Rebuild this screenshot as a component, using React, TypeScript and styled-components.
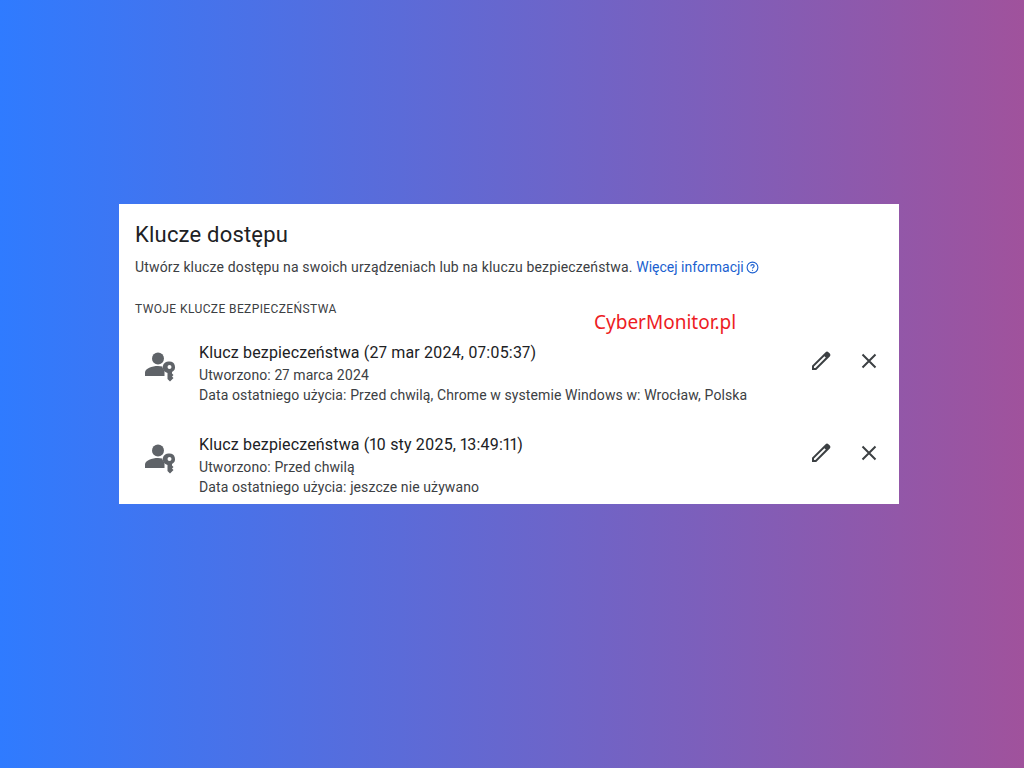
import styled, { createGlobalStyle } from "styled-components";

const GlobalStyle = createGlobalStyle`
  html, body {
    margin: 0;
    padding: 0;
    height: 100%;
  }
  #root {
    height: 100%;
  }
`;

const keys = [
  {
    name: "Klucz bezpieczeństwa (27 mar 2024, 07:05:37)",
    created: "Utworzono: 27 marca 2024",
    used: "Data ostatniego użycia: Przed chwilą, Chrome w systemie Windows w: Wrocław, Polska",
  },
  {
    name: "Klucz bezpieczeństwa (10 sty 2025, 13:49:11)",
    created: "Utworzono: Przed chwilą",
    used: "Data ostatniego użycia: jeszcze nie używano",
  },
];

const PasskeyIcon = () => (
  <svg width="32" height="32" viewBox="0 0 32 32" fill="#5f6368">
    <circle cx="14" cy="8.5" r="6" />
    <path d="M1 26v-3.5c0-4 7-6.5 13-6.5 1.5 0 3 .2 4.3.5.3 1.700 1 3 2.200 4V26H1z" />
    <path
      fillRule="evenodd"
      d="M25.500 11.500a5.500 5.500 0 0 1 2.500 10.400v1.600l1.500 1.500-1.500 1.500 1.500 1.500-3.500 3.500-2.500-2.500v-6.100a5.500 5.500 0 0 1 2-11.400zm0 3.500a2 2 0 1 0 0 4 2 2 0 0 0 0-4z"
    />
  </svg>
);

const PencilIcon = () => (
  <svg width="24" height="24" viewBox="0 0 24 24" fill="#3c4043">
    <path
      fillRule="evenodd"
      d="M3 21v-4.200L16.600 3.200a2 2 0 0 1 2.800 0l1.400 1.400a2 2 0 0 1 0 2.800L7.200 21H3zm2-2h1.400L16.800 8.600l-1.400-1.400L5 17.600V19z"
    />
  </svg>
);

const CloseIcon = () => (
  <svg width="24" height="24" viewBox="0 0 24 24" fill="none" stroke="#3c4043" strokeWidth="2">
    <path d="M5.500 5.500l13 13M18.500 5.500l-13 13" />
  </svg>
);

const HelpIcon = () => (
  <svg width="13" height="13" viewBox="0 0 13 13" fill="none" stroke="#1a5fd0" strokeWidth="1.100">
    <circle cx="6.500" cy="6.500" r="5.400" />
    <path d="M4.800 5.200c0-1 .8-1.600 1.700-1.600s1.700.6 1.700 1.500c0 1.200-1.700 1.200-1.700 2.500" />
    <path d="M6.500 8.800v1" />
  </svg>
);

export default function App() {
  return (
    <Page>
      <GlobalStyle />
      <Card>
        <Title>Klucze dostępu</Title>
        <Description>
          Utwórz klucze dostępu na swoich urządzeniach lub na kluczu bezpieczeństwa.{" "}
          <MoreLink>
            Więcej informacji
            <HelpIcon />
          </MoreLink>
        </Description>
        <SectionLabel>Twoje klucze bezpieczeństwa</SectionLabel>
        <KeyList>
          {keys.map((k) => (
            <KeyRow key={k.name}>
              <KeyIcon>
                <PasskeyIcon />
              </KeyIcon>
              <KeyInfo>
                <KeyName>{k.name}</KeyName>
                <KeyMeta>{k.created}</KeyMeta>
                <KeyMeta>{k.used}</KeyMeta>
              </KeyInfo>
              <Actions>
                <ActionButton>
                  <PencilIcon />
                </ActionButton>
                <ActionButton>
                  <CloseIcon />
                </ActionButton>
              </Actions>
            </KeyRow>
          ))}
        </KeyList>
        <Watermark>CyberMonitor.pl</Watermark>
      </Card>
    </Page>
  );
}

const Page = styled.div`
  box-sizing: border-box;
  height: 100%;
  padding: 204px 0 0 119px;
  background: linear-gradient(90deg, #2f7bff 0%, #a0529c 100%);
`;

const Card = styled.div`
  position: relative;
  box-sizing: border-box;
  width: 780px;
  height: 300px;
  padding: 17px 16px 0;
  overflow: hidden;
  background: #fff;
  font-family: Roboto, "Liberation Sans", sans-serif;
  font-variant-numeric: proportional-nums;
  color: #202124;
`;

const Title = styled.h1`
  margin: 0;
  font-size: 22px;
  line-height: 28px;
  font-weight: 400;
  letter-spacing: 0.2px;
`;

const Description = styled.p`
  margin: 8px 0 0;
  font-size: 14px;
  line-height: 20px;
  letter-spacing: 0.15px;
  color: #3c4043;
`;

const MoreLink = styled.a`
  display: inline-flex;
  align-items: center;
  gap: 2px;
  letter-spacing: 0;
  color: #1a5fd0;
`;

const SectionLabel = styled.h2`
  margin: 24px 0 0;
  font-size: 12px;
  line-height: 16px;
  font-weight: 400;
  letter-spacing: 0.4px;
  text-transform: uppercase;
  color: #3c4043;
`;

const KeyList = styled.div`
  margin-top: 23px;
  display: flex;
  flex-direction: column;
  gap: 27px;
`;

const KeyRow = styled.div`
  display: flex;
  align-items: flex-start;
`;

const KeyIcon = styled.div`
  width: 64px;
  padding: 10px 0 0 9px;
  box-sizing: border-box;
  display: flex;
`;

const KeyInfo = styled.div`
  flex: 1;
  display: flex;
  flex-direction: column;
`;

const KeyName = styled.div`
  padding-top: 1px;
  font-size: 16px;
  line-height: 24px;
  font-weight: 400;
  letter-spacing: 0.16px;
`;

const KeyMeta = styled.div`
  font-size: 14px;
  line-height: 20px;
  letter-spacing: 0.1px;
  color: #3c4043;
`;

const Actions = styled.div`
  display: flex;
  gap: 24px;
  margin-top: 9px;
  padding-right: 2px;
`;

const ActionButton = styled.button`
  width: 24px;
  height: 24px;
  padding: 0;
  border: 0;
  background: none;
  display: flex;
`;

const Watermark = styled.div`
  position: absolute;
  left: 475px;
  top: 105px;
  font-family: "Noto Sans", sans-serif;
  font-size: 19px;
  line-height: 26px;
  color: #ed1c24;
`;
